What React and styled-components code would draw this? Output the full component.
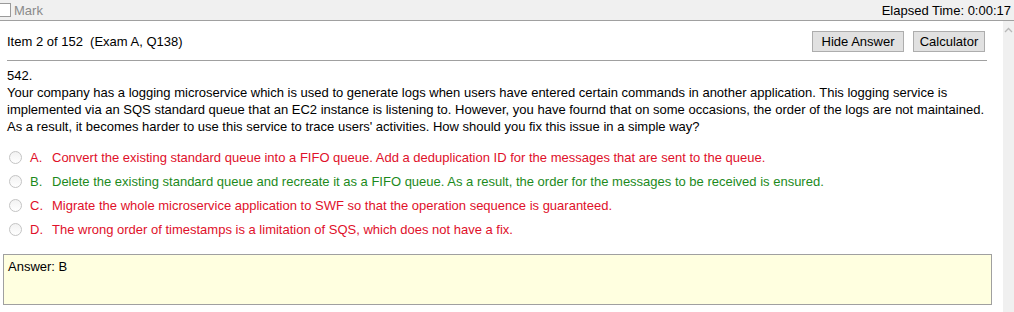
import styled, { createGlobalStyle } from "styled-components";

const GlobalStyle = createGlobalStyle`
  html, body {
    margin: 0;
    padding: 0;
    background: #ffffff;
  }
  body {
    font-family: Arial, "Liberation Sans", sans-serif;
    font-size: 13px;
    color: #000;
  }
`;

const Page = styled.div`
  width: 1014px;
  height: 312px;
  overflow: hidden;
  display: flex;
  flex-direction: column;
`;

const TopBar = styled.div`
  height: 21px;
  background: #f0f0f0;
  border-bottom: 1px solid #a0a0a0;
  display: flex;
  align-items: center;
  justify-content: space-between;
  padding-right: 3px;
  box-sizing: border-box;
  flex-shrink: 0;
`;

const MarkBox = styled.label`
  display: flex;
  align-items: center;
  gap: 3px;
  color: #8a8a8a;
  font-size: 13px;
`;

const CheckBox = styled.span`
  width: 11px;
  height: 12px;
  margin-left: -2px;
  background: #fff;
  border: 1px solid #9a9a9a;
`;

const Elapsed = styled.span`
  font-size: 13px;
  color: #000;
`;

const Body = styled.div`
  flex: 1;
  display: flex;
  min-height: 0;
`;

const Content = styled.div`
  flex: 1;
  padding: 0 16px 0 7px;
  display: flex;
  flex-direction: column;
`;

const Scrollbar = styled.div`
  width: 11px;
  background: #f0f0f0;
  display: flex;
  justify-content: center;
  padding-top: 6px;
  box-sizing: border-box;
`;

const Header = styled.div`
  height: 40px;
  display: flex;
  align-items: center;
  justify-content: space-between;
  border-bottom: 1px solid #a0a0a0;
  box-sizing: border-box;
  padding-top: 2px;
`;

const Buttons = styled.div`
  display: flex;
  gap: 9px;
  margin-right: 2px;
`;

const Button = styled.button`
  width: ${(p) => p.$w}px;
  height: 21px;
  padding: 0;
  font-family: Arial, "Liberation Sans", sans-serif;
  font-size: 13px;
  color: #000;
  background: #e1e1e1;
  border: 1px solid #adadad;
  border-radius: 0;
`;

const Question = styled.div`
  margin-top: 6px;
  line-height: 17px;
  font-size: 13px;
`;

const Options = styled.div`
  margin-top: 10px;
  display: flex;
  flex-direction: column;
`;

const Option = styled.div`
  height: 24px;
  display: flex;
  align-items: center;
  color: ${(p) => (p.$correct ? "#1c8a1c" : "#e0102a")};
`;

const Radio = styled.span`
  width: 11px;
  height: 11px;
  border-radius: 50%;
  border: 1px solid #c4c4c4;
  background: linear-gradient(180deg, #f2f2f2, #ffffff);
  margin: 0 8px 0 2px;
  flex-shrink: 0;
`;

const Letter = styled.span`
  width: 22px;
`;

const AnswerBox = styled.div`
  margin: 13px -5px 0 -4px;
  height: 51px;
  background: #ffffe0;
  border: 1px solid #a0a0a0;
  padding: 4px 4px;
  box-sizing: border-box;
`;

const options = [
  { l: "A.", t: "Convert the existing standard queue into a FIFO queue. Add a deduplication ID for the messages that are sent to the queue." },
  { l: "B.", t: "Delete the existing standard queue and recreate it as a FIFO queue. As a result, the order for the messages to be received is ensured.", correct: true },
  { l: "C.", t: "Migrate the whole microservice application to SWF so that the operation sequence is guaranteed." },
  { l: "D.", t: "The wrong order of timestamps is a limitation of SQS, which does not have a fix." },
];

export default function App() {
  return (
    <Page>
      <GlobalStyle />
      <TopBar>
        <MarkBox>
          <CheckBox />
          Mark
        </MarkBox>
        <Elapsed>Elapsed Time: 0:00:17</Elapsed>
      </TopBar>
      <Body>
        <Content>
          <Header>
            <span>Item 2 of 152&nbsp; (Exam A, Q138)</span>
            <Buttons>
              <Button $w={92}>Hide Answer</Button>
              <Button $w={72}>Calculator</Button>
            </Buttons>
          </Header>
          <Question>
            542.
            <br />
            Your company has a logging microservice which is used to generate logs when users have entered certain commands in another application. This logging service is implemented via an SQS standard queue that an EC2 instance is listening to. However, you have fournd that on some occasions, the order of the logs are not maintained. As a result, it becomes harder to use this service to trace users' activities. How should you fix this issue in a simple way?
          </Question>
          <Options>
            {options.map((o) => (
              <Option key={o.l} $correct={o.correct}>
                <Radio />
                <Letter>{o.l}</Letter>
                {o.t}
              </Option>
            ))}
          </Options>
          <AnswerBox>Answer: B</AnswerBox>
        </Content>
        <Scrollbar>
          <svg width="9" height="6" viewBox="0 0 9 6">
            <path d="M1 5 L4.5 1.5 L8 5" fill="none" stroke="#b8b8b8" strokeWidth="1.3" />
          </svg>
        </Scrollbar>
      </Body>
    </Page>
  );
}
